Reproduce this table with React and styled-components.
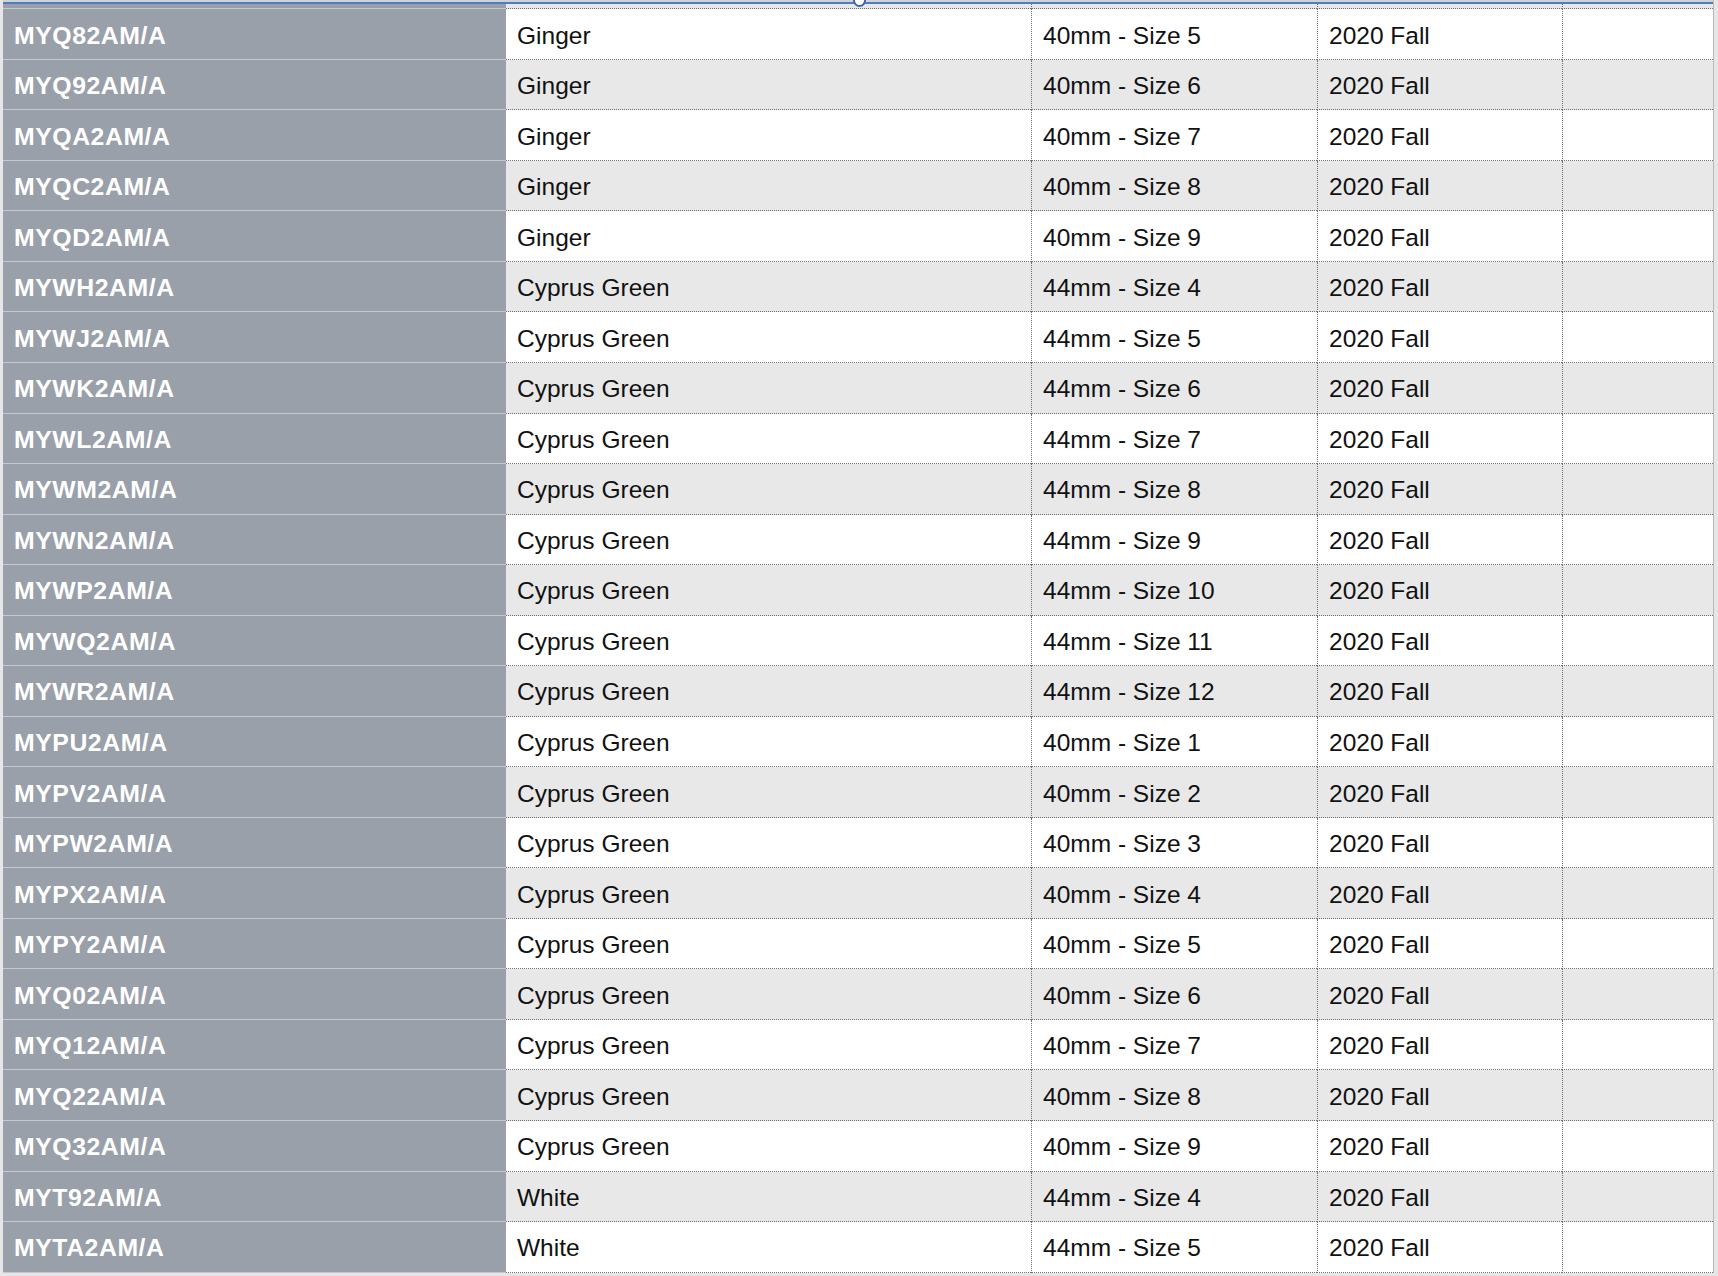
import styled, { createGlobalStyle } from "styled-components";

const GlobalStyle = createGlobalStyle`
  html, body {
    margin: 0;
    padding: 0;
    background: #e6e6e6;
  }
  body {
    font-family: "Liberation Sans", Arial, sans-serif;
  }
`;

const ROW_H = 50.54;
const COLUMNS = "503px 525px 286px 245px 151px";

const rows = [
  ["MYQ82AM/A", "Ginger", "40mm - Size 5"],
  ["MYQ92AM/A", "Ginger", "40mm - Size 6"],
  ["MYQA2AM/A", "Ginger", "40mm - Size 7"],
  ["MYQC2AM/A", "Ginger", "40mm - Size 8"],
  ["MYQD2AM/A", "Ginger", "40mm - Size 9"],
  ["MYWH2AM/A", "Cyprus Green", "44mm - Size 4"],
  ["MYWJ2AM/A", "Cyprus Green", "44mm - Size 5"],
  ["MYWK2AM/A", "Cyprus Green", "44mm - Size 6"],
  ["MYWL2AM/A", "Cyprus Green", "44mm - Size 7"],
  ["MYWM2AM/A", "Cyprus Green", "44mm - Size 8"],
  ["MYWN2AM/A", "Cyprus Green", "44mm - Size 9"],
  ["MYWP2AM/A", "Cyprus Green", "44mm - Size 10"],
  ["MYWQ2AM/A", "Cyprus Green", "44mm - Size 11"],
  ["MYWR2AM/A", "Cyprus Green", "44mm - Size 12"],
  ["MYPU2AM/A", "Cyprus Green", "40mm - Size 1"],
  ["MYPV2AM/A", "Cyprus Green", "40mm - Size 2"],
  ["MYPW2AM/A", "Cyprus Green", "40mm - Size 3"],
  ["MYPX2AM/A", "Cyprus Green", "40mm - Size 4"],
  ["MYPY2AM/A", "Cyprus Green", "40mm - Size 5"],
  ["MYQ02AM/A", "Cyprus Green", "40mm - Size 6"],
  ["MYQ12AM/A", "Cyprus Green", "40mm - Size 7"],
  ["MYQ22AM/A", "Cyprus Green", "40mm - Size 8"],
  ["MYQ32AM/A", "Cyprus Green", "40mm - Size 9"],
  ["MYT92AM/A", "White", "44mm - Size 4"],
  ["MYTA2AM/A", "White", "44mm - Size 5"],
];

const Sheet = styled.div`
  position: relative;
  margin-left: 3px;
  width: 1710px;
  height: 1273px;
  overflow: hidden;
  border-right: 1px solid #b9b9b9;
  box-sizing: content-box;
  display: flex;
  flex-direction: column;
`;

const Row = styled.div`
  display: grid;
  grid-template-columns: ${COLUMNS};
  flex: none;
  height: ${(p) => p.$height}px;
  background: ${(p) => (p.$striped ? "#e8e8e8" : "#ffffff")};
`;

const KeyCell = styled.div`
  display: flex;
  align-items: center;
  padding: 3px 0 0 11px;
  box-sizing: border-box;
  background: #99a0aa;
  border-bottom: 1px solid #c6cad0;
  color: #ffffff;
  font-weight: 700;
  font-size: 24.8px;
  letter-spacing: 0.55px;
  white-space: nowrap;
  overflow: hidden;
`;

const Cell = styled.div`
  display: flex;
  align-items: center;
  padding: 3px 0 0 11px;
  box-sizing: border-box;
  border-bottom: 1px dotted #707070;
  border-left: ${(p) => (p.$divider ? "1px dotted #707070" : "none")};
  color: #111111;
  font-size: 24.5px;
  white-space: nowrap;
  overflow: hidden;
`;

const DropLine = styled.div`
  position: absolute;
  left: -3px;
  right: 0;
  top: 2px;
  height: 2px;
  background: #4d7cc2;
`;

const DropHandle = styled.div`
  position: absolute;
  left: 850px;
  top: -6px;
  width: 9px;
  height: 9px;
  border-radius: 50%;
  background: #ffffff;
  border: 2px solid #3f66a8;
`;

const TopShade = styled.div`
  position: absolute;
  left: 0;
  right: 0;
  top: 0;
  height: 2px;
  background: #cfd2d6;
`;

function DataRow({ sku, color, size, striped, height = ROW_H, year = "2020 Fall" }) {
  return (
    <Row $striped={striped} $height={height}>
      <KeyCell>{sku}</KeyCell>
      <Cell>{color}</Cell>
      <Cell $divider>{size}</Cell>
      <Cell $divider>{year}</Cell>
      <Cell $divider></Cell>
    </Row>
  );
}

export default function App() {
  return (
    <>
      <GlobalStyle />
      <Sheet>
        {/* tail of the row scrolled above the view */}
        <DataRow striped height={9.3} year="" />
        {rows.map(([sku, color, size], i) => (
          <DataRow
            key={sku}
            sku={sku}
            color={color}
            size={size}
            striped={i % 2 === 1}
          />
        ))}
        <TopShade />
        <DropLine />
        <DropHandle />
      </Sheet>
    </>
  );
}
